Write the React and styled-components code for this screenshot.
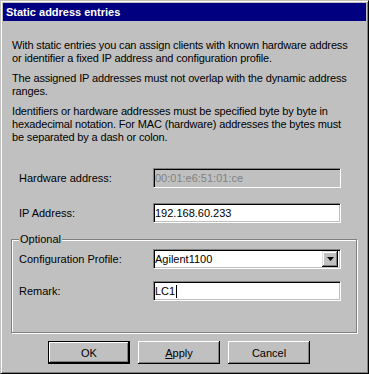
import React from 'react';
import styled, { createGlobalStyle } from 'styled-components';

const GlobalStyle = createGlobalStyle`
  html, body {
    margin: 0;
    padding: 0;
    background: #c0c0c0;
  }
  body {
    font-family: "Liberation Sans", Arial, sans-serif;
    font-size: 11px;
    color: #000;
  }
`;

const Window = styled.div`
  box-sizing: border-box;
  width: 369px;
  height: 374px;
  background: #c0c0c0;
  border: 1px solid;
  border-color: #c0c0c0 #000 #000 #c0c0c0;
  box-shadow: inset 1px 1px #fff, inset -1px -1px #808080;
  padding: 2px;
  display: flex;
  flex-direction: column;
`;

const TitleBar = styled.div`
  height: 18px;
  line-height: 18px;
  background: #000080;
  color: #fff;
  font-weight: bold;
  font-size: 11px;
  padding-left: 3px;
`;

const Body = styled.div`
  padding: 18px 6px 0 9px;
  display: flex;
  flex-direction: column;
`;

const Para = styled.p`
  margin: 0 6px 7px 0;
  line-height: 13px;
  letter-spacing: -0.15px;
`;

const Form = styled.div`
  display: flex;
  flex-direction: column;
  gap: 15px;
  margin: 17px 0 0 7px;
`;

const Row = styled.div`
  display: grid;
  grid-template-columns: 134px 188px;
  align-items: center;
`;

const Label = styled.span`
  line-height: 13px;
`;

const Field = styled.div`
  box-sizing: border-box;
  height: 20px;
  line-height: 16px;
  padding: 0 1px;
  background: ${p => (p.$disabled ? '#c0c0c0' : '#fff')};
  color: ${p => (p.$disabled ? '#808080' : '#000')};
  border: 1px solid;
  border-color: #808080 #fff #fff #808080;
  box-shadow: inset 1px 1px #000, inset -1px -1px #c0c0c0;
  display: flex;
  align-items: center;
  white-space: nowrap;
`;

const Caret = styled.span`
  display: inline-block;
  width: 1px;
  height: 13px;
  background: #000;
  margin-left: 1px;
`;

const Combo = styled(Field)`
  justify-content: space-between;
  padding-right: 2px;
`;

const DropButton = styled.div`
  box-sizing: border-box;
  width: 16px;
  height: 16px;
  background: #c0c0c0;
  box-shadow: inset -1px -1px #000, inset 1px 1px #dfdfdf, inset -2px -2px #808080, inset 2px 2px #fff;
  display: flex;
  align-items: center;
  justify-content: center;
`;

const Group = styled.fieldset`
  margin: 10px 0 0 -1px;
  width: 346px;
  box-sizing: border-box;
  border: 1px solid #808080;
  box-shadow: inset 1px 1px #fff, 1px 1px #fff;
  padding: 3px 6px 31px 7px;
  display: flex;
  flex-direction: column;
  gap: 12px;
`;

const Legend = styled.legend`
  padding: 0 1px;
  margin-left: 0;
  line-height: 13px;
  background: #c0c0c0;
`;

const ButtonBar = styled.div`
  display: flex;
  gap: 8px;
  margin: 8px 0 0 36px;
`;

const Button = styled.div`
  box-sizing: border-box;
  width: 82px;
  height: 23px;
  background: #c0c0c0;
  display: flex;
  align-items: center;
  justify-content: center;
  border: ${p => (p.$default ? '1px solid #000' : 'none')};
  box-shadow: inset -1px -1px #000, inset 1px 1px #fff, inset -2px -2px #808080;
`;

const Underline = styled.span`
  text-decoration: underline;
`;

export default function App() {
  return (
    <>
      <GlobalStyle />
      <Window>
        <TitleBar>Static address entries</TitleBar>
        <Body>
          <Para>
            With static entries you can assign clients with known hardware address
            or identifier a fixed IP address and configuration profile.
          </Para>
          <Para>
            The assigned IP addresses must not overlap with the dynamic address
            ranges.
          </Para>
          <Para>
            Identifiers or hardware addresses must be specified byte by byte in
            hexadecimal notation. For MAC (hardware) addresses the bytes must be
            separated by a dash or colon.
          </Para>
          <Form>
            <Row>
              <Label>Hardware address:</Label>
              <Field $disabled>00:01:e6:51:01:ce</Field>
            </Row>
            <Row>
              <Label>IP Address:</Label>
              <Field>192.168.60.233</Field>
            </Row>
          </Form>
          <Group>
            <Legend>Optional</Legend>
            <Row>
              <Label>Configuration Profile:</Label>
              <Combo>
                <span>Agilent1100</span>
                <DropButton>
                  <svg width="7" height="4" viewBox="0 0 7 4">
                    <path d="M0 0h7L3.5 4z" fill="#000" />
                  </svg>
                </DropButton>
              </Combo>
            </Row>
            <Row>
              <Label>Remark:</Label>
              <Field>
                LC1<Caret />
              </Field>
            </Row>
          </Group>
          <ButtonBar>
            <Button $default>OK</Button>
            <Button>
              <span><Underline>A</Underline>pply</span>
            </Button>
            <Button>Cancel</Button>
          </ButtonBar>
        </Body>
      </Window>
    </>
  );
}
